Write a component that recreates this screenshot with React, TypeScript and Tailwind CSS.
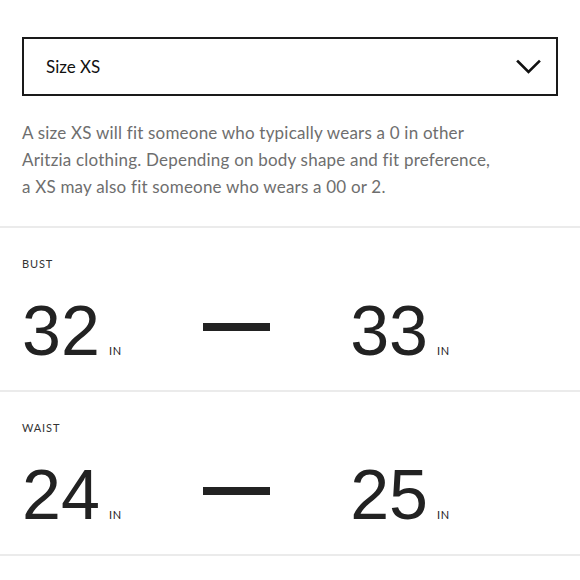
import React from 'react';

interface Measure {
  label: string;
  from: number;
  to: number;
}

const measures: Measure[] = [
  { label: 'BUST', from: 32, to: 33 },
  { label: 'WAIST', from: 24, to: 25 },
];

const Chevron = () => (
  <svg width="25" height="16" viewBox="0 0 25 16" fill="none">
    <path d="M2 2.5 L12.5 13 L23 2.5" stroke="#111" strokeWidth="2.6" strokeLinecap="square" />
  </svg>
);

const MeasureRow: React.FC<{ m: Measure }> = ({ m }) => (
  <div className="border-b-2 border-[#ebebeb] px-[22px] pt-[28px] pb-[24px]">
    <div className="text-[11px] leading-[16px] tracking-[0.08em] text-[#333] font-['Lato',sans-serif]">
      {m.label}
    </div>
    <div className="mt-[24px] flex items-center text-[#222] font-['Liberation_Sans',Arial,sans-serif]">
      <div className="flex w-[181px] items-baseline">
        <span className="w-[80px] text-[70px] leading-[70px]">{m.from}</span>
        <span className="ml-[7px] text-[11px] tracking-[0.06em] font-['Lato',sans-serif]">IN</span>
      </div>
      <div className="mb-2 h-[8px] w-[67px] bg-[#222]" />
      <div className="flex items-baseline">
        <span className="w-[158px] text-right text-[70px] leading-[70px]">{m.to}</span>
        <span className="ml-[9px] text-[11px] tracking-[0.06em] font-['Lato',sans-serif]">IN</span>
      </div>
    </div>
  </div>
);

export default function App() {
  return (
    <div className="h-[580px] w-[580px] overflow-hidden bg-white">
      <div className="border-b-2 border-[#ebebeb] px-[22px] pt-[37px] pb-[26px]">
        <div className="flex h-[59px] items-center justify-between border-2 border-[#1a1a1a] pl-[22px] pr-[15px]">
          <span className="text-[17px] text-[#111] font-['Lato',sans-serif]">Size XS</span>
          <Chevron />
        </div>
        <p className="mt-[23px] whitespace-nowrap text-[17px] leading-[27px] tracking-[0.012em] text-[#6e6e6e] font-['Lato',sans-serif]">
          A size XS will fit someone who typically wears a 0 in other
          <br />
          Aritzia clothing. Depending on body shape and fit preference,
          <br />
          a XS may also fit someone who wears a 00 or 2.
        </p>
      </div>
      {measures.map((m) => (
        <MeasureRow key={m.label} m={m} />
      ))}
    </div>
  );
}
